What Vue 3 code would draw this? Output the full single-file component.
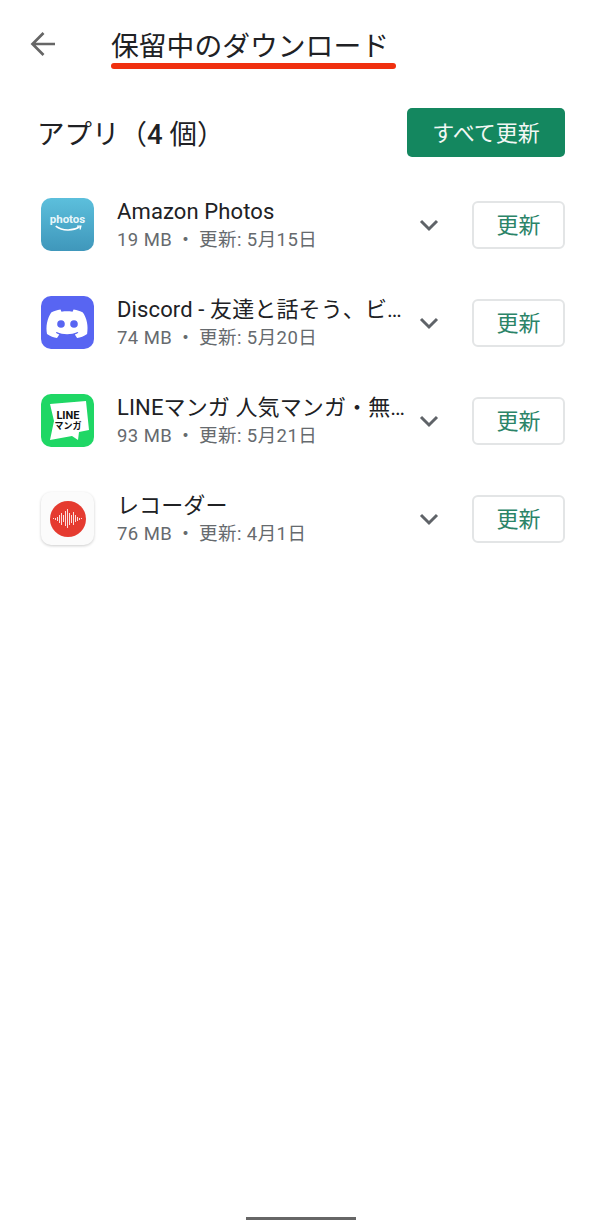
<script setup>
const apps = [
  { id: 'photos', name: 'Amazon Photos', size: '19 MB', date: '5月15日' },
  { id: 'discord', name: 'Discord - 友達と話そう、ビ…', size: '74 MB', date: '5月20日' },
  { id: 'line', name: 'LINEマンガ 人気マンガ・無…', size: '93 MB', date: '5月21日' },
  { id: 'rec', name: 'レコーダー', size: '76 MB', date: '4月1日' },
]
const bars = [1, 2, 4, 8, 12, 7, 15, 19, 12, 8, 13, 7, 4, 2, 1]
</script>

<template>
  <div class="page">
    <header class="top">
      <svg class="back" viewBox="0 0 28 28" width="28" height="28">
        <path d="M26 14H3.500M14.500 3 3.500 14l11 11" fill="none" stroke="#666" stroke-width="2.700" />
      </svg>
      <h1 class="title">保留中のダウンロード</h1>
    </header>

    <div class="section">
      <h2 class="heading">アプリ（<b>4</b> 個）</h2>
      <button class="all">すべて更新</button>
    </div>

    <ul class="list">
      <li v-for="a in apps" :key="a.id" class="row">
        <div class="icon" :class="a.id">
          <template v-if="a.id === 'photos'">
            <span class="ph">photos</span>
            <svg viewBox="0 0 34 10" width="29" height="9" class="smile">
              <path d="M2 1c8 6 20 6 28 1" fill="none" stroke="#fff" stroke-width="1.800" />
              <path d="M27 1l4.500 0-1 4" fill="none" stroke="#fff" stroke-width="1.500" />
            </svg>
          </template>
          <svg v-else-if="a.id === 'discord'" viewBox="0 0 53 53" width="53" height="53">
            <path fill="#fff" d="M19.500 13.500c-3.500.6-6.700 1.600-9.300 3C6 23 4.700 30.500 6 38c3.300 2.400 6.700 3.500 10 4l2.300-3.500c-1.300-.5-2.500-1-3.500-1.800l.9-.8c6.500 3 14.300 3 20.800 0l.9.8c-1 .8-2.300 1.300-3.600 1.800l2.300 3.500c3.400-.5 6.800-1.600 10-4 1.400-8-.2-15.500-4.200-21.500-2.600-1.400-5.800-2.400-9.300-3l-1.100 2.200c-3.700-.5-7.300-.5-11 0z" />
            <circle cx="20" cy="28" r="3.800" fill="#5865f2" />
            <circle cx="33" cy="28" r="3.800" fill="#5865f2" />
          </svg>
          <template v-else-if="a.id === 'line'">
            <svg viewBox="0 0 53 53" width="53" height="53" class="fill">
              <path fill="#fff" d="M9 10 45 7l3 29-10 2-1 8-6-4-22 4 4-19z" />
            </svg>
            <span class="ln"><b>LINE</b><b class="kana">マンガ</b></span>
          </template>
          <div v-else class="disc">
            <i v-for="(h, n) in bars" :key="n" class="bar" :style="{ height: h + 'px' }"></i>
          </div>
        </div>
        <div class="info">
          <div class="name">{{ a.name }}</div>
          <div class="meta">{{ a.size }}<span class="dot">・</span>更新: {{ a.date }}</div>
        </div>
        <svg class="chev" viewBox="0 0 20 14" width="20" height="14">
          <path d="M2 3l8 8 8-8" fill="none" stroke="#5f6368" stroke-width="3" />
        </svg>
        <button class="update">更新</button>
      </li>
    </ul>

    <div class="spacer"></div>
    <div class="home"></div>
  </div>
</template>

<style scoped>
.page {
  width: 602px;
  height: 1230px;
  background: #fff;
  display: flex;
  flex-direction: column;
  font-family: Roboto, "Noto Sans CJK JP", sans-serif;
  color: #202124;
  overflow: hidden;
}
.top {
  display: flex;
  align-items: center;
  padding: 25px 0 0 29px;
  height: 44px;
}
.back {
  flex: none;
  margin-top: -6px;
}
.title {
  margin: 0 0 0 54px;
  padding: 0 7px 0 0;
  font-size: 27.800px;
  font-weight: 400;
  line-height: 38px;
  position: relative;
}
.title::after {
  content: "";
  position: absolute;
  left: 0;
  right: 0;
  bottom: -3px;
  height: 6px;
  border-radius: 3px;
  background: #f0300f;
}
.section {
  display: flex;
  align-items: center;
  justify-content: space-between;
  margin-top: 39px;
  padding: 0 37px 0 37px;
}
.heading {
  margin: 4px 0 0;
  font-size: 27.500px;
  font-weight: 400;
  line-height: 45px;
}
.heading b { font-weight: 500; }
.all {
  width: 158px;
  height: 49px;
  border: 0;
  border-radius: 5px;
  background: #14875f;
  color: #f2f7f4;
  font: 400 22px Roboto, "Noto Sans CJK JP", sans-serif;
  padding: 0 0 4px;
}
.list {
  list-style: none;
  margin: 41px 0 0;
  padding: 0 37px 0 41px;
  display: flex;
  flex-direction: column;
  gap: 45px;
}
.row {
  display: flex;
  align-items: center;
  height: 53px;
}
.icon {
  flex: none;
  width: 53px;
  height: 53px;
  border-radius: 10px;
  position: relative;
  overflow: hidden;
  display: flex;
  flex-direction: column;
  align-items: center;
  justify-content: center;
}
.photos { background: linear-gradient(#5cbfdc, #3f97bb); }
.ph {
  color: #e8f6fa;
  font: 700 11.500px/12px Roboto, sans-serif;
  margin-top: -2px;
}
.smile {
  margin-top: 0;
  margin-left: 2px;
}
.discord { background: #5865f2; }
.line { background: #1fd765; }
.fill { position: absolute; inset: 0; }
.ln {
  position: relative;
  display: flex;
  flex-direction: column;
  align-items: center;
  color: #111;
  margin-left: 1px;
  margin-top: 1px;
}
.ln b {
  font-size: 11px;
  line-height: 10px;
  font-weight: 700;
}
.ln .kana {
  font-size: 9px;
  line-height: 11px;
}
.rec {
  background: #fbfbfb;
  box-shadow: 0 1px 3px rgba(0, 0, 0, .2);
}
.disc {
  width: 36px;
  height: 36px;
  border-radius: 50%;
  background: #e53b30;
  display: flex;
  align-items: center;
  justify-content: center;
  gap: .8px;
}
.bar {
  width: 1.200px;
  background: #fbdedc;
}
.info {
  flex: none;
  width: 290px;
  margin-left: 23px;
  margin-top: 2px;
  min-width: 0;
}
.name {
  font-size: 22px;
  line-height: 29px;
  letter-spacing: .12px;
  white-space: nowrap;
}
.meta {
  font-size: 18.500px;
  line-height: 29px;
  letter-spacing: .42px;
  color: #666a6e;
  white-space: nowrap;
}
.dot { margin: 0 4px; }
.chev {
  flex: none;
  margin-left: 12px;
}
.update {
  flex: none;
  width: 93px;
  height: 48px;
  margin-left: 33px;
  border: 2px solid #e3e5e6;
  border-radius: 6px;
  background: #fff;
  color: #2b8468;
  font: 400 22px Roboto, "Noto Sans CJK JP", sans-serif;
  padding: 0 0 4px;
}
.spacer { flex: 1; }
.home {
  align-self: center;
  width: 110px;
  height: 3px;
  background: #666;
  margin-bottom: 10px;
}
</style>
